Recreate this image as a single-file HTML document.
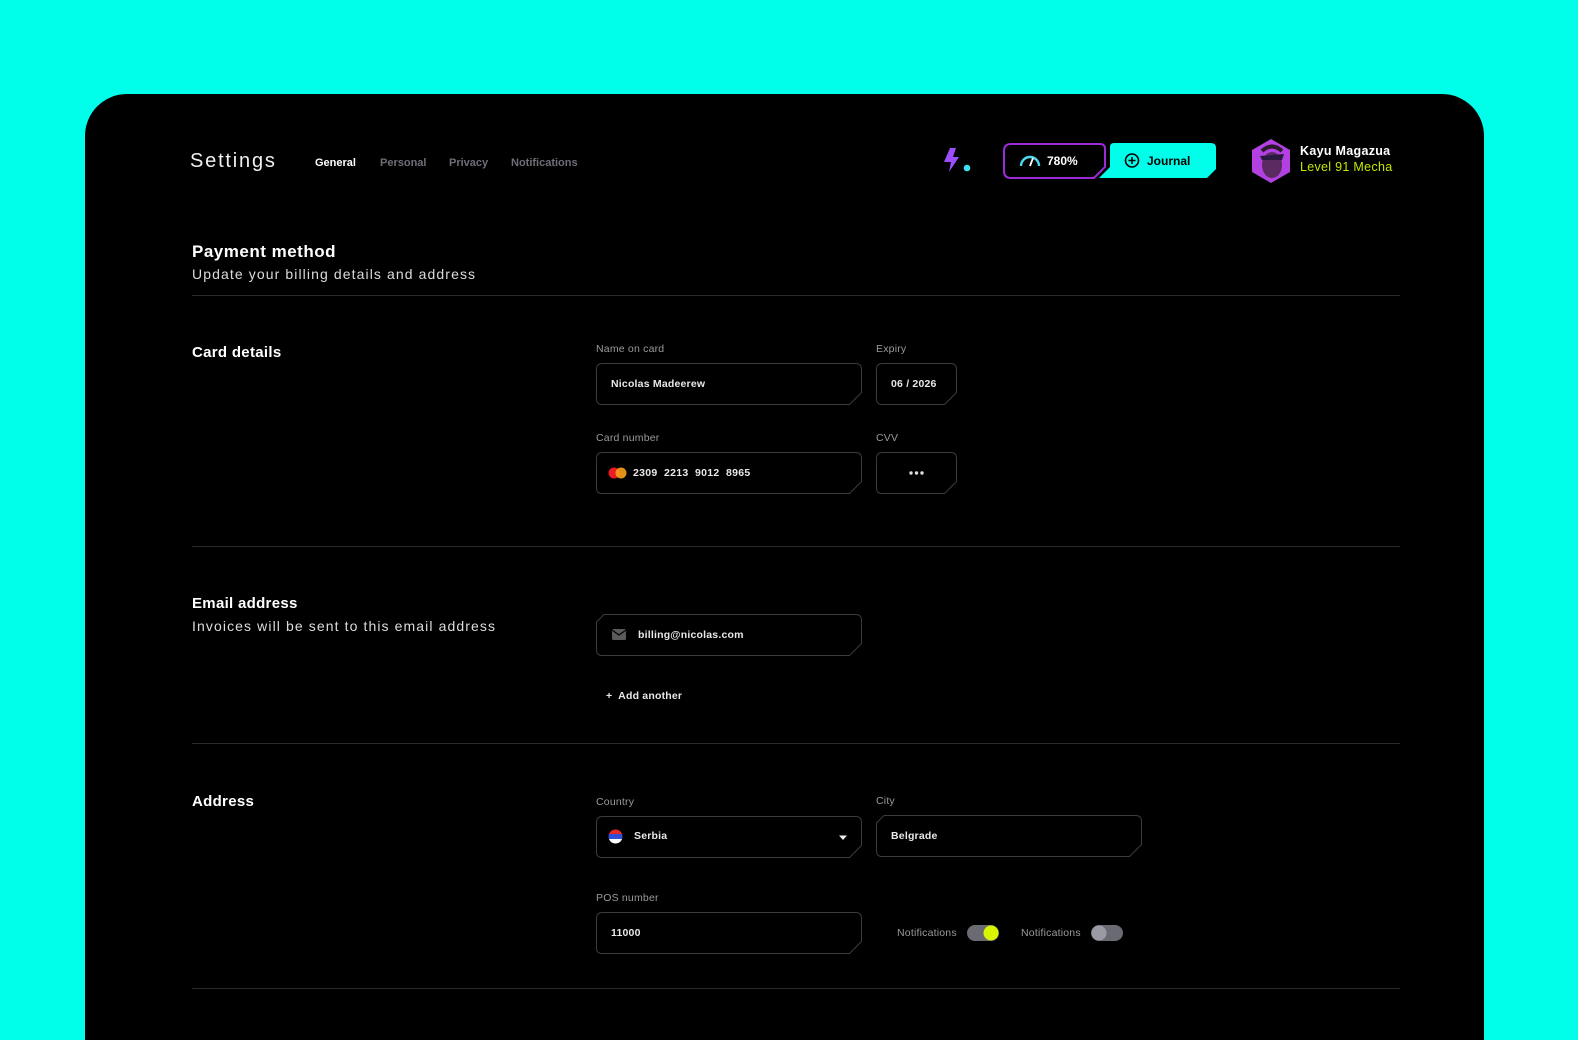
<!DOCTYPE html>
<html><head><meta charset="utf-8">
<style>
*{margin:0;padding:0;box-sizing:border-box}
html,body{width:1578px;height:1040px;overflow:hidden}
body{background:#00FFEA;position:relative;font-family:"Liberation Sans",sans-serif;color:#fff}
.card{position:absolute;left:85px;top:94px;width:1399px;height:946px;background:#000;border-radius:42px 42px 0 0}
.a{position:absolute;white-space:nowrap}
.lbl{font-size:10.5px;color:#9a9a9a;letter-spacing:.2px}
.val{font-size:10.5px;color:#e8e8e8;font-weight:bold;letter-spacing:.2px}
.hr{position:absolute;left:192px;width:1208px;height:1px;background:#2a2a2a}
.h{font-size:15px;font-weight:bold;letter-spacing:.3px}
.sub{font-size:14px;color:#dcdcdc;letter-spacing:1.1px}
svg{position:absolute;overflow:visible}
</style></head><body>
<div class="card"></div>

<div class="a" style="left:190px;top:150px;font-size:20px;letter-spacing:1.8px;color:#f0f0f0">Settings</div>
<div class="a" style="left:315px;top:157px;font-size:11px;font-weight:bold;color:#fff">General</div>
<div class="a" style="left:380px;top:157px;font-size:11px;font-weight:bold;color:#6e6e78">Personal</div>
<div class="a" style="left:449px;top:157px;font-size:11px;font-weight:bold;color:#6e6e78">Privacy</div>
<div class="a" style="left:511px;top:157px;font-size:11px;font-weight:bold;color:#6e6e78">Notifications</div>

<svg style="left:944px;top:148px" width="28" height="26" viewBox="0 0 28 26"><path d="M6 0 L0 14 H7 L5 24 L15 9 H9 L12 0Z" fill="#9B4DFF"/><circle cx="23" cy="20" r="3.3" fill="#3CE0F0"/></svg>
<svg style="left:1003px;top:143px" width="104" height="36" viewBox="0 0 104 36"><path d="M8 1 H97 Q102 1 102 6 V24 L91 35 H8 Q1 35 1 28 V8 Q1 1 8 1Z" fill="#000" stroke="#9B2BD9" stroke-width="2"/>
<path d="M18 23 A9 9 0 0 1 36 23" fill="none" stroke="#4ED8F0" stroke-width="2.4"/><path d="M27 23 L30 15" stroke="#fff" stroke-width="1.8"/></svg>
<div class="a" style="left:1047px;top:154px;font-size:12px;font-weight:bold">780%</div>
<svg style="left:1099px;top:143px" width="118" height="36" viewBox="0 0 118 36"><path d="M15 0 H112 Q117 0 117 5 V26 L108 35 H0 L11 24 V4 Q11 0 15 0Z" fill="#00FFEA"/>
<circle cx="33" cy="17.5" r="6.5" fill="none" stroke="#000" stroke-width="1.6"/><path d="M33 14 V21 M29.5 17.5 H36.5" stroke="#000" stroke-width="1.6"/></svg>
<div class="a" style="left:1147px;top:154px;font-size:12px;font-weight:bold;color:#000">Journal</div>
<svg style="left:1250px;top:138px" width="42" height="46" viewBox="0 0 42 46"><path d="M21 1 L40 12 V34 L21 45 L2 34 V12Z" fill="#B340E0"/>
<ellipse cx="22" cy="27" rx="10" ry="13" fill="#5a2a60"/><path d="M10 18 L34 16 L32 22 L12 22Z" fill="#2a1a40"/><path d="M12 13 Q22 4 32 13" stroke="#2a1a2a" stroke-width="4" fill="none"/></svg>
<div class="a" style="left:1300px;top:144px;font-size:12.5px;font-weight:bold;letter-spacing:.3px">Kayu Magazua</div>
<div class="a" style="left:1300px;top:160px;font-size:12.5px;color:#C6E600;letter-spacing:.3px">Level 91 Mecha</div>

<div class="a h" style="left:192px;top:242px;font-size:17px;letter-spacing:.5px">Payment method</div>
<div class="a sub" style="left:192px;top:266px">Update your billing details and address</div>
<div class="hr" style="top:295px"></div>

<div class="a h" style="left:192px;top:344px">Card details</div>
<div class="a lbl" style="left:596px;top:343px">Name on card</div>
<div class="a lbl" style="left:876px;top:343px">Expiry</div>
<svg style="left:596px;top:363px" width="266" height="42"><path d="M6 .5 H259.5 Q265.5 .5 265.5 6.5 V29.5 L253.5 41.5 H6 Q.5 41.5 .5 35.5 V6.5 Q.5 .5 6.5 .5Z" fill="none" stroke="#3c3c3c"/></svg>
<div class="a val" style="left:611px;top:378px">Nicolas Madeerew</div>
<svg style="left:876px;top:363px" width="81" height="42"><path d="M6 .5 H74.5 Q80.5 .5 80.5 6.5 V29.5 L68.5 41.5 H6 Q.5 41.5 .5 35.5 V6.5 Q.5 .5 6.5 .5Z" fill="none" stroke="#3c3c3c"/></svg>
<div class="a val" style="left:891px;top:378px">06 / 2026</div>

<div class="a lbl" style="left:596px;top:432px">Card number</div>
<div class="a lbl" style="left:876px;top:432px">CVV</div>
<svg style="left:596px;top:452px" width="266" height="42"><path d="M6 .5 H259.5 Q265.5 .5 265.5 6.5 V29.5 L253.5 41.5 H6 Q.5 41.5 .5 35.5 V6.5 Q.5 .5 6.5 .5Z" fill="none" stroke="#3c3c3c"/><circle cx="18" cy="21" r="5.5" fill="#EB1C24"/><circle cx="25" cy="21" r="5.5" fill="#F9A01B" opacity=".9"/></svg>
<div class="a val" style="left:633px;top:467px;letter-spacing:.3px">2309 &nbsp;2213 &nbsp;9012 &nbsp;8965</div>
<svg style="left:876px;top:452px" width="81" height="42"><path d="M6 .5 H74.5 Q80.5 .5 80.5 6.5 V29.5 L68.5 41.5 H6 Q.5 41.5 .5 35.5 V6.5 Q.5 .5 6.5 .5Z" fill="none" stroke="#3c3c3c"/><circle cx="35" cy="21" r="1.7" fill="#ddd"/><circle cx="40.5" cy="21" r="1.7" fill="#ddd"/><circle cx="46" cy="21" r="1.7" fill="#ddd"/></svg>
<div class="hr" style="top:546px"></div>

<div class="a h" style="left:192px;top:595px">Email address</div>
<div class="a sub" style="left:192px;top:618px">Invoices will be sent to this email address</div>
<svg style="left:596px;top:614px" width="266" height="42"><path d="M8 .5 H259.5 Q265.5 .5 265.5 6.5 V29.5 L253.5 41.5 H6 Q.5 41.5 .5 35.5 V8Z" fill="none" stroke="#3c3c3c"/><rect x="16" y="15" width="14" height="11" rx="1.5" fill="#5a5a5a"/><path d="M16 16 L23 21 L30 16" stroke="#000" stroke-width="1.2" fill="none"/></svg>
<div class="a val" style="left:638px;top:629px">billing@nicolas.com</div>
<div class="a val" style="left:606px;top:690px">+&nbsp; Add another</div>
<div class="hr" style="top:743px"></div>

<div class="a h" style="left:192px;top:793px">Address</div>
<div class="a lbl" style="left:596px;top:796px">Country</div>
<div class="a lbl" style="left:876px;top:795px">City</div>
<svg style="left:596px;top:816px" width="266" height="42"><path d="M6 .5 H259.5 Q265.5 .5 265.5 6.5 V29.5 L253.5 41.5 H6 Q.5 41.5 .5 35.5 V6.5 Q.5 .5 6.5 .5Z" fill="none" stroke="#3c3c3c"/>
<clipPath id="f"><circle cx="19.5" cy="20.5" r="7"/></clipPath><g clip-path="url(#f)"><rect x="12" y="13" width="15" height="5" fill="#E42B2B"/><rect x="12" y="18" width="15" height="5" fill="#2F4FD6"/><rect x="12" y="23" width="15" height="5" fill="#fff"/></g>
<path d="M243 19.5 H251 L247 24Z" fill="#eee"/></svg>
<div class="a val" style="left:634px;top:830px">Serbia</div>
<svg style="left:876px;top:815px" width="266" height="42"><path d="M8 .5 H259.5 Q265.5 .5 265.5 6.5 V29.5 L253.5 41.5 H6 Q.5 41.5 .5 35.5 V8Z" fill="none" stroke="#3c3c3c"/></svg>
<div class="a val" style="left:891px;top:830px">Belgrade</div>

<div class="a lbl" style="left:596px;top:892px">POS number</div>
<svg style="left:596px;top:912px" width="266" height="42"><path d="M6 .5 H259.5 Q265.5 .5 265.5 6.5 V29.5 L253.5 41.5 H6 Q.5 41.5 .5 35.5 V6.5 Q.5 .5 6.5 .5Z" fill="none" stroke="#3c3c3c"/></svg>
<div class="a val" style="left:611px;top:927px">11000</div>
<div class="a lbl" style="left:897px;top:927px">Notifications</div>
<svg style="left:967px;top:925px" width="32" height="16"><rect width="32" height="16" rx="8" fill="#6a6a72"/><circle cx="24" cy="8" r="7.5" fill="#D8F400"/></svg>
<div class="a lbl" style="left:1021px;top:927px">Notifications</div>
<svg style="left:1091px;top:925px" width="32" height="16"><rect width="32" height="16" rx="8" fill="#6a6a72"/><circle cx="8" cy="8" r="7.5" fill="#9a9aa4"/></svg>
<div class="hr" style="top:988px"></div>
</body></html>
